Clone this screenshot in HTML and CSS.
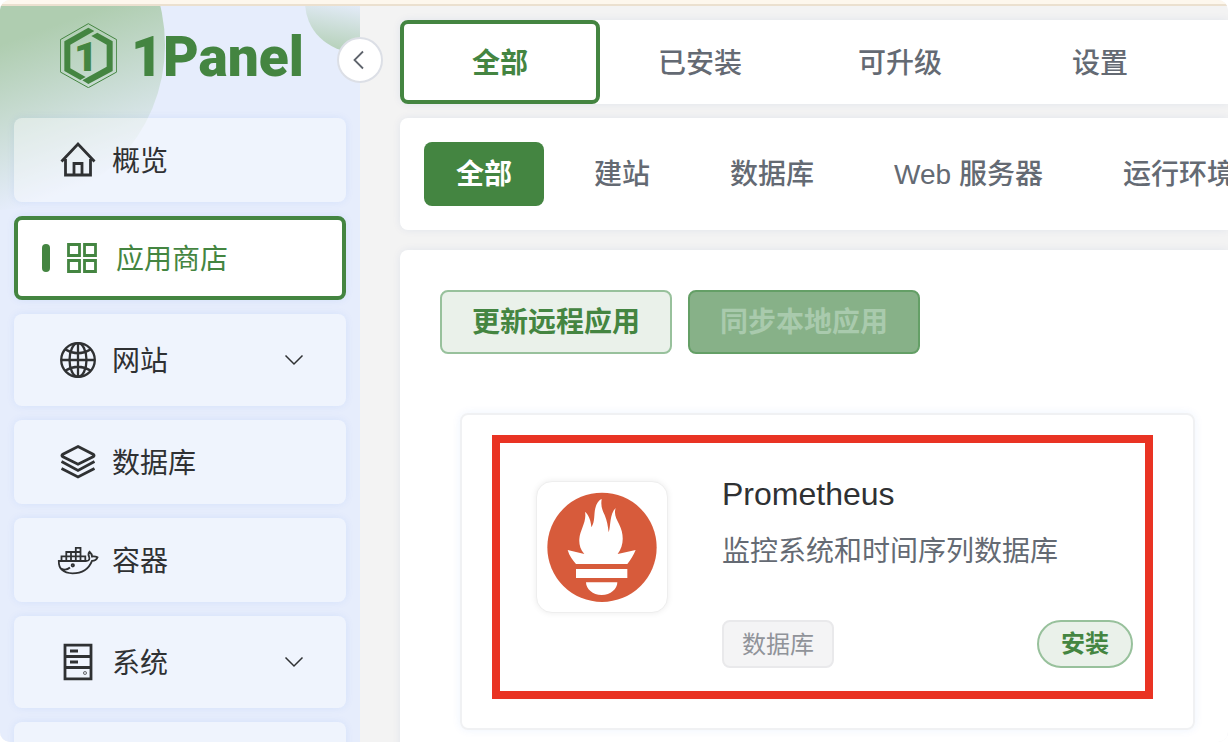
FILE: index.html
```html
<!DOCTYPE html>
<html lang="zh-CN">
<head>
  <meta charset="UTF-8">
  <title>1Panel</title>
  <link rel="stylesheet" href="styles.css">
</head>
<body>
<div class="app">
  <div class="notice"></div>
  <div class="layout">
    <!-- 侧边栏 -->
    <div class="sidebar">
      <a class="logo" href="#">
        <svg class="logo-mark" viewBox="60 36 171 195">
          <polygon points="145,38 230,86 230,183 145,230 61,183 61,86" fill="none" stroke="#448541" stroke-width="3"/>
          <path d="M145 50 L163 60 L91 101 V172 L137 198 L121 207 L73 180 V91 Z" fill="#448541"/>
          <path d="M172 65 L218 91 V180 L145 219 L127 208 L200 167 V101 L154 75 Z" fill="#448541"/>
          <text x="138" y="180" text-anchor="middle" class="logo-one">1</text>
        </svg>
        <span class="logo-text">1Panel</span>
      </a>
      <ul class="menu">
        <li><a class="item" href="#">
          <svg class="icon" viewBox="0 0 36 36"><path d="M1.500 19.500 L18 2 L34.500 19.500 M5.500 17 V33 H30.500 V17 M14 33 V21.500 H22 V33"/></svg>
          <span>概览</span>
        </a></li>
        <li><a class="item active" href="#">
          <svg class="icon icon-grid" viewBox="0 0 32 32"><path d="M2.500 2.500 H13.500 V13.500 H2.500 Z M18.500 2.500 H29.500 V13.500 H18.500 Z M2.500 18.500 H13.500 V29.500 H2.500 Z M18.500 18.500 H29.500 V29.500 H18.500 Z"/></svg>
          <span>应用商店</span>
        </a></li>
        <li><a class="item sub" href="#">
          <svg class="icon icon-globe" viewBox="0 0 36 36"><circle cx="18" cy="18" r="16.800"/><ellipse cx="18" cy="18" rx="8.500" ry="16.800"/><path d="M18 1 V35 M1 18 H35 M5.500 7.500 Q18 15 30.500 7.500 M5.500 28.500 Q18 21 30.500 28.500"/></svg>
          <span>网站</span>
          <svg class="arrow" viewBox="0 0 20 20"><path d="M1.500 5.500 L10 14 L18.500 5.500"/></svg>
        </a></li>
        <li><a class="item" href="#">
          <svg class="icon" viewBox="0 0 36 36"><path d="M18 2.500 L33.500 10.500 Q34.500 11.500 33.500 12.500 L18 20.300 L2.500 12.500 Q1.500 11.500 2.500 10.500 Z M1.500 17.500 L18 26.500 L34.500 17.500 M1.500 24.500 L18 33 L34.500 24.500"/></svg>
          <span>数据库</span>
        </a></li>
        <li><a class="item" href="#">
          <svg class="icon icon-docker" viewBox="2 -5 36 36"><path d="M.8 14 H28 C31.500 14 32 12 31 9.500 C30 7.500 30.500 6 31.500 4.800 C33.500 6.500 34 8 34 9.500 C36.500 9 38 9.500 39.500 10.300 C38.500 12.800 36.500 13.800 34 13.800 C31 21.500 25 26.300 14.500 26.300 C5 26.300 .6 21.500 .8 14 Z M3.500 13.500 V9.300 H27.300 V13.500 M8.300 13.500 V5 H22.500 M13 5 V13.500 M17.800 13.500 V.8 H22.500 V13.500 M3 21.500 C7 23.500 10 22.300 12 20.500"/><circle cx="14.800" cy="18.300" r="1.200"/></svg>
          <span>容器</span>
        </a></li>
        <li><a class="item sub" href="#">
          <svg class="icon" viewBox="0 0 36 36"><path d="M5 1.200 H31 V34.800 H5 Z M5 12.500 H31 M5 23.500 H31 M10 7 H18 M10 18 H18"/><circle cx="25" cy="29" r=".4"/></svg>
          <span>系统</span>
          <svg class="arrow" viewBox="0 0 20 20"><path d="M1.500 5.500 L10 14 L18.500 5.500"/></svg>
        </a></li>
        <li><a class="item" href="#"></a></li>
      </ul>
    </div>
    <button class="collapse" type="button" aria-label="收起菜单">
      <svg viewBox="0 0 20 20"><path d="M13 1.500 L4.500 10 L13 18.500"/></svg>
    </button>

    <!-- 主内容 -->
    <div class="main">
      <div class="box tabs">
        <button class="tab current" type="button">全部</button>
        <button class="tab" type="button">已安装</button>
        <button class="tab" type="button">可升级</button>
        <button class="tab" type="button">设置</button>
      </div>
      <div class="box tags">
        <button class="tag-btn current" type="button">全部</button>
        <button class="tag-btn" type="button">建站</button>
        <button class="tag-btn" type="button">数据库</button>
        <button class="tag-btn" type="button">Web 服务器</button>
        <button class="tag-btn" type="button">运行环境</button>
      </div>
      <div class="box content">
        <div class="actions">
          <button class="btn" type="button">更新远程应用</button>
          <button class="btn btn-disabled" type="button" disabled>同步本地应用</button>
        </div>
        <div class="card">
          <div class="app-icon">
            <svg viewBox="21 21 390 390">
              <circle cx="216" cy="217" r="164" fill="#d75b3b"/>
              <path fill="#fff" d="M113 225 L163 237 C150 222 147 207 148 192 C150 165 171 140 165 110 C178 122 183 140 184 157 C196 140 191 118 196 100 C200 84 206 76 215 72 C212 92 216 104 224 120 C231 136 234 155 236 172 C243 152 238 118 257 99 C251 118 259 132 267 147 C283 178 282 212 263 237 L317 225 C311 240 301 256 292 267 H138 C128 256 118 243 113 225 Z M138 282 H292 V309 H138 Z M168 322 H262 C262 342 242 360 215 360 C188 360 168 342 168 322 Z"/>
            </svg>
          </div>
          <div class="info">
            <h3>Prometheus</h3>
            <p>监控系统和时间序列数据库</p>
            <div class="info-foot">
              <span class="label">数据库</span>
              <button class="install" type="button">安装</button>
            </div>
          </div>
          <div class="mark"></div>
        </div>
      </div>
    </div>
  </div>
</div>
</body>
</html>
```
FILE: styles.css
```css
* {
  padding: 0;
  margin: 0;
  box-sizing: border-box;
  list-style: none;
}

body {
  background: #fff;
  font-family: "Liberation Sans", "Noto Sans CJK SC", sans-serif;
  font-size: 28px;
  color: #2f3133;
}

a {
  color: inherit;
  text-decoration: none;
}

button {
  font-family: inherit;
  font-size: 28px;
  font-weight: 500;
  line-height: 40px;
  white-space: nowrap;
  border: 0;
  background: none;
  cursor: pointer;
}

svg {
  display: block;
  fill: none;
}

.app {
  display: flex;
  flex-direction: column;
  height: 100vh;
  overflow: hidden;
  border-radius: 10px;
  background: #f3f3f3;
}

.notice {
  flex: none;
  height: 6px;
  background: #fdf7ed;
  border-bottom: 2px solid #ebe0cf;
}

.layout {
  position: relative;
  flex: 1;
  min-height: 0;
  display: flex;
}

/* 侧边栏 */
.sidebar {
  position: relative;
  flex: none;
  width: 360px;
  padding: 0 14px;
  overflow: hidden;
  background: #e6edfc;
}

.sidebar::before,
.sidebar::after {
  content: "";
  position: absolute;
  border-radius: 50%;
}

.sidebar::before {
  left: -165px;
  top: -126px;
  width: 330px;
  height: 330px;
  background: linear-gradient(160deg, #afcdb0 50%, #e6edfc 88%);
}

.sidebar::after {
  left: 305px;
  top: -54px;
  width: 100px;
  height: 100px;
  background: linear-gradient(190deg, #e6edfc 50%, #afcdb0 100%);
}

.logo {
  position: relative;
  z-index: 1;
  display: flex;
  align-items: center;
  gap: 14px;
  height: 98px;
  padding-left: 46px;
  color: #448541;
}

.logo-mark {
  width: 57px;
  height: 65px;
}

.logo-one {
  font-family: Roboto, sans-serif;
  font-size: 124px;
  font-weight: 900;
  fill: #448541;
}

.logo-text {
  padding-top: 4px;
  font-family: Roboto, sans-serif;
  font-size: 55px;
  font-weight: 900;
  line-height: 64px;
}

.menu {
  position: relative;
  z-index: 1;
  display: flex;
  flex-direction: column;
  gap: 14px;
  margin-top: 14px;
}

.item {
  display: flex;
  align-items: center;
  gap: 16px;
  height: 84px;
  padding: 0 42px 0 46px;
  border-radius: 8px;
  background: rgba(255, 255, 255, 0.38);
  box-shadow: 0 0 8px rgba(0, 94, 235, 0.08);
}

.item span {
  padding-bottom: 2px;
}

.item.sub {
  height: 92px;
}

.item.active {
  padding-left: 24px;
  border: 4px solid #448541;
  background: #fff;
  color: #448541;
}

.item.active::before {
  content: "";
  width: 8px;
  height: 28px;
  border-radius: 4px;
  background: #448541;
}

.icon {
  flex: none;
  width: 36px;
  height: 36px;
  overflow: visible;
  stroke: currentColor;
  stroke-width: 2.8;
}

.icon-grid {
  width: 32px;
  height: 32px;
  margin-right: 2px;
}

.icon-globe {
  stroke-width: 2.3;
}

.icon-docker {
  stroke-width: 1.8;
}

.arrow {
  width: 20px;
  height: 20px;
  margin-left: auto;
  stroke: #2f3133;
  stroke-width: 1.5;
}

.collapse {
  position: absolute;
  left: 337px;
  top: 31px;
  z-index: 2;
  display: flex;
  align-items: center;
  justify-content: center;
  width: 46px;
  height: 46px;
  border: 2px solid #dcdfe6;
  border-radius: 50%;
  background: #fff;
}

.collapse svg {
  width: 20px;
  height: 20px;
  stroke: #5f646c;
  stroke-width: 1.8;
}

/* 主内容 */
.main {
  flex: 1;
  min-width: 0;
  display: flex;
  flex-direction: column;
  padding: 14px 0 0 40px;
  overflow: hidden;
}

.box {
  flex: none;
  border-radius: 8px 0 0 8px;
  background: #fff;
  box-shadow: 0 0 8px rgba(0, 60, 150, 0.08);
}

.tabs {
  display: flex;
  margin-bottom: 14px;
}

.tab {
  flex: none;
  width: 200px;
  height: 84px;
  padding-top: 4px;
  color: #646a73;
}

.tab.current {
  border: 4px solid #448541;
  border-radius: 8px;
  color: #448541;
}

.tags {
  display: flex;
  gap: 16px;
  margin-bottom: 20px;
  padding: 24px;
  overflow: hidden;
}

.tag-btn {
  flex: none;
  height: 64px;
  padding: 2px 32px 0;
  border-radius: 8px;
  color: #646a73;
}

.tag-btn.current {
  margin-right: 2px;
  background: #448541;
  color: #fff;
}

.current,
.btn,
.install {
  font-weight: 600;
}

.content {
  flex: 1 0 auto;
  padding: 40px 33px 40px 40px;
}

.actions {
  display: flex;
  gap: 16px;
}

.btn {
  height: 64px;
  padding: 2px 30px 0;
  border: 2px solid #98c19c;
  border-radius: 8px;
  background: #eaf1ea;
  color: #448541;
}

.btn-disabled {
  border-color: #649f66;
  background: #87b188;
  color: #a9caad;
  cursor: not-allowed;
}

.card {
  position: relative;
  display: flex;
  gap: 54px;
  margin: 59px 0 0 20px;
  padding: 55px 60px 60px 74px;
  border: 2px solid #f0f1f3;
  border-radius: 8px;
  box-shadow: 0 0 10px rgba(0, 94, 235, 0.07);
}

.app-icon {
  flex: none;
  width: 132px;
  height: 132px;
  margin-top: 11px;
  border: 1px solid #eee;
  border-radius: 16px;
  background: #fff;
  box-shadow: 0 0 6px rgba(0, 0, 0, 0.08);
}

.info {
  flex: 1;
  min-width: 0;
}

.info h3 {
  font-size: 32px;
  font-weight: 400;
  line-height: 48px;
}

.info p {
  margin-top: 14px;
  line-height: 40px;
  color: #646a73;
}

.info-foot {
  display: flex;
  align-items: center;
  justify-content: space-between;
  margin-top: 48px;
}

.label {
  height: 48px;
  padding: 0 18px;
  border: 2px solid #e9e9eb;
  border-radius: 8px;
  background: #f4f4f5;
  font-size: 24px;
  line-height: 46px;
  color: #909399;
}

.install {
  height: 48px;
  padding: 0 22px;
  border: 2px solid #98c19c;
  border-radius: 24px;
  background: #eaf1ea;
  font-size: 24px;
  color: #448541;
}

/* 红色标注框 */
.mark {
  position: absolute;
  top: 20px;
  right: 40px;
  bottom: 29px;
  left: 30px;
  border: 8px solid #e93323;
  pointer-events: none;
}
```
